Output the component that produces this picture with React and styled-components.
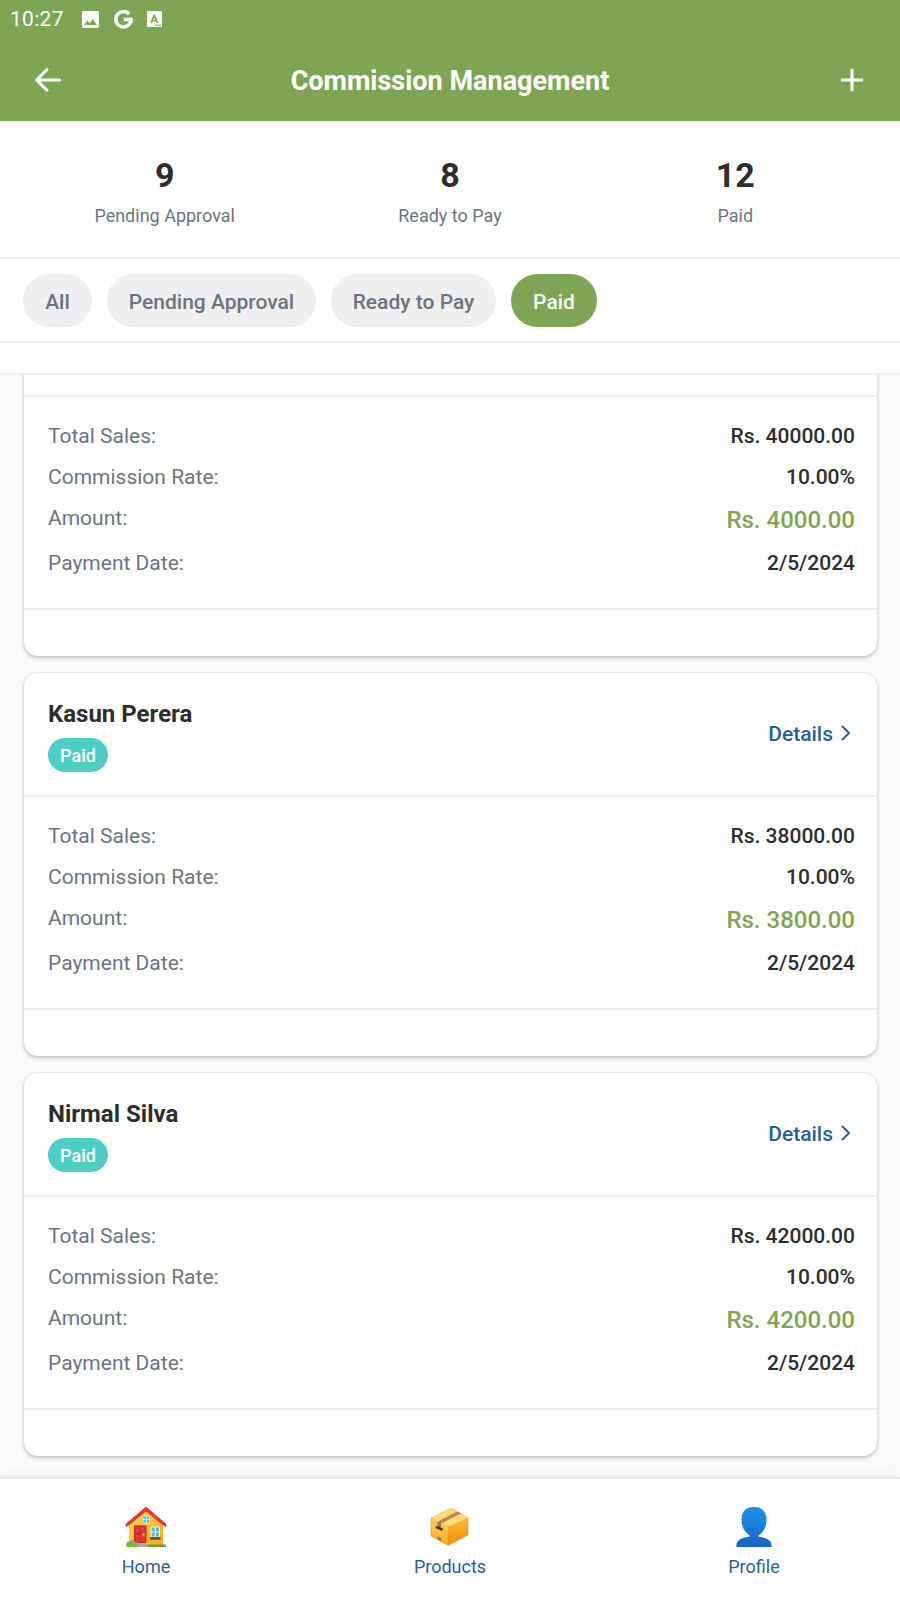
import React from 'react';
import styled, { createGlobalStyle } from 'styled-components';

const Global = createGlobalStyle`
  * { box-sizing: border-box; }
  html, body { margin: 0; padding: 0; }
  body { font-family: Roboto, sans-serif; background: #f8f9fb; color: #2d2d2d; }
`;

const Screen = styled.div`
  width: 900px; height: 1600px; overflow: hidden;
  display: flex; flex-direction: column; background: #f8f9fb;
`;
const Top = styled.header`
  height: 121px; flex: none; background: #7ea553; color: #fff;
`;
const StatusBar = styled.div`
  height: 38px; padding: 0 10px; display: flex; align-items: center;
  svg { display: block; }
`;
const Time = styled.span`
  font-size: 21px; letter-spacing: 0.3px; width: 71px; line-height: 24px;
`;
const StatusIcons = styled.div`
  display: flex; align-items: center; gap: 14px;
`;
const TitleBar = styled.div`
  height: 83px; padding: 0 33px; display: flex; align-items: center; justify-content: space-between;
  svg { display: block; }
`;
const Title = styled.h1`
  margin: 2px 0 0; font-size: 27px; font-weight: 700; line-height: 36px; letter-spacing: 0; white-space: nowrap;
`;
const Stats = styled.section`
  flex: none; height: 138px; background: #fff; border-bottom: 2px solid #eee;
  padding: 34px 22px 0; display: flex;
`;
const Stat = styled.div`
  flex: 1; display: flex; flex-direction: column; align-items: center;
`;
const StatValue = styled.div`
  font-size: 34px; font-weight: 700; line-height: 40px;
`;
const StatLabel = styled.div`
  margin-top: 10px; font-size: 18px; line-height: 22px; color: #6c757d;
`;
const Filters = styled.nav`
  flex: none; height: 84px; background: #fff; border-bottom: 2px solid #eee;
  padding: 15px 23px 0; display: flex; align-items: flex-start; gap: 15px;
`;
const Pill = styled.button`
  width: ${(p) => p.$w}px; height: 53px; border: 0; border-radius: 26.5px; padding: 3px 0 0;
  font: 500 21px/24px Roboto, sans-serif; white-space: nowrap;
  background: ${(p) => (p.$active ? '#7ea553' : '#efefef')};
  color: ${(p) => (p.$active ? '#fff' : '#6c757d')};
`;
const Strip = styled.div`
  flex: none; height: 32px; background: #fff; border-bottom: 2px solid #eee;
`;
const List = styled.main`
  flex: 1; min-height: 0; overflow: hidden; padding: 0 23px 0 24px;
  display: flex; flex-direction: column; justify-content: flex-end; gap: 17px; padding-bottom: 21px;
`;
const Card = styled.article`
  flex: none; height: 383px; background: #fff; border-radius: 14px;
  box-shadow: 0 2px 4px rgba(0, 0, 0, 0.2), 0 0 2px rgba(0, 0, 0, 0.12);
`;
const CardHead = styled.div`
  height: 124px; border-bottom: 2px solid #eee; padding: 0 26px 0 24px;
  display: flex; align-items: center; justify-content: space-between;
`;
const Person = styled.div`
  display: flex; flex-direction: column; align-items: flex-start; padding-top: 2px;
`;
const Name = styled.h2`
  margin: 0; font-size: 24px; font-weight: 700; line-height: 30px;
`;
const Badge = styled.span`
  margin-top: 9px; width: 60px; height: 34px; border-radius: 17px; background: #4ecdc4; color: #fff;
  font-size: 18px; font-weight: 500; line-height: 36px; text-align: center;
`;
const Details = styled.a`
  display: flex; align-items: center; gap: 8px; color: #2a6093; font-size: 21px; font-weight: 500; line-height: 26px;
  svg { display: block; margin-bottom: 2px; }
`;
const CardBody = styled.div`
  height: 213px; border-bottom: 2px solid #eee; padding: 26px 22px 0 24px;
`;
const Row = styled.div`
  display: flex; justify-content: space-between; align-items: flex-start;
  height: ${(p) => (p.$big ? 45 : 41)}px;
`;
const Label = styled.span`
  font-size: 21px; line-height: 26px; color: #6c757d;
`;
const Value = styled.span`
  font-weight: 500; font-size: ${(p) => (p.$big ? 24 : 21)}px; line-height: ${(p) => (p.$big ? 30 : 26)}px;
  color: ${(p) => (p.$big ? '#7ea553' : '#2d2d2d')};
`;
const TabBar = styled.footer`
  flex: none; height: 123px; background: #fff; border-top: 2px solid #e6e9ed; z-index: 1;
  box-shadow: 0 -1px 10px rgba(0, 0, 0, 0.07); padding: 27px 0 0; padding-right: 6px; padding-left: 0;
  display: flex; justify-content: space-between; padding: 27px 86px 0;
`;
const Tab = styled.a`
  width: 120px; display: flex; flex-direction: column; align-items: center;
  color: #2a6093; font-size: 18px; line-height: 22px;
  svg { display: block; margin-bottom: 8px; }
`;

const ImageIcon = () => (
  <svg width="19" height="19" viewBox="0 0 19 19">
    <path fill="#fff" fillRule="evenodd" d="M2.5 1h14A1.6 1.6 0 0 1 18 2.5v14a1.6 1.6 0 0 1-1.5 1.5h-14A1.6 1.6 0 0 1 1 16.500v-14A1.600 1.600 0 0 1 2.500 1zM3 15h13l-4.300-5.700-3.100 4-2.200-2.700z" />
  </svg>
);
const GoogleIcon = () => (
  <svg width="19" height="19" viewBox="0 0 19 19">
    <path d="M15.200 4A7.700 7.700 0 1 0 17.200 9.500H9.800" fill="none" stroke="#fff" strokeWidth="3.400" />
  </svg>
);
const LetterIcon = () => (
  <svg width="15" height="16" viewBox="0 0 15 16">
    <rect width="15" height="16" rx="1" fill="#fff" />
    <path d="M4.200 12L7 4.500h.6L10.400 12M5.200 9.500h4.200" fill="none" stroke="#7ea553" strokeWidth="1.700" />
    <path d="M8 14.200h1.500M10.300 14.200h1.400M12.400 14.200h1.300" stroke="#7ea553" strokeWidth="1.400" />
  </svg>
);
const BackIcon = () => (
  <svg width="30" height="30" viewBox="0 0 30 30">
    <path d="M14 4.500L3.700 15 14 25.200M4 15h22.500" fill="none" stroke="#fff" strokeWidth="3" strokeLinecap="round" strokeLinejoin="round" />
  </svg>
);
const PlusIcon = () => (
  <svg width="30" height="30" viewBox="0 0 30 30">
    <path d="M15 4v22M4 15h22" stroke="#fff" strokeWidth="3" />
  </svg>
);
const Chevron = () => (
  <svg width="10" height="16" viewBox="0 0 10 16">
    <path d="M1.500 1.500L8 8l-6.500 6.500" fill="none" stroke="#2a6093" strokeWidth="1.900" strokeLinecap="round" strokeLinejoin="round" />
  </svg>
);

const HouseIcon = () => (
  <svg width="42" height="42" viewBox="0 0 42 42">
    <defs>
      <linearGradient id="wall" x1="0" y1="0" x2="1" y2="1">
        <stop offset="0" stopColor="#ffd54a" /><stop offset="1" stopColor="#fba91a" />
      </linearGradient>
    </defs>
    <path d="M4 17L21 3l17 14v22H4z" fill="url(#wall)" />
    <path d="M21 1L1 18v2.500L4 19 21 5l17 14 3 1.500V18z" fill="#e53935" stroke="#c62828" strokeWidth=".6" />
    <rect x="17.500" y="9.500" width="7.500" height="8" fill="#fff3c4" />
    <path d="M18.300 10.300h2.500v2.800h-2.500zM21.700 10.300h2.500v2.800h-2.500zM18.300 14h2.500v2.700h-2.500zM21.700 14h2.500v2.700h-2.500z" fill="#4fb8ee" />
    <rect x="9" y="19.500" width="12.500" height="18" fill="#c62828" />
    <path d="M10.500 21h4.200v6h-4.200zM15.800 21H20v6h-4.200zM10.500 28.500h4.200V36h-4.200zM15.800 28.500H20V36h-4.200z" fill="#e5393c" />
    <circle cx="18.600" cy="28.500" r="1.200" fill="#ffca28" />
    <rect x="25.500" y="20.500" width="9.500" height="11" fill="#fff3c4" />
    <path d="M26.700 21.500h3v4h-3zM30.900 21.500h3v4h-3zM26.700 26.500h3v4h-3zM30.900 26.500h3v4h-3z" fill="#4fb8ee" />
    <rect x="25" y="31" width="10.500" height="2.800" fill="#6d4c41" />
    <path d="M2 38.500h39V41H2z" fill="#689f38" />
    <path d="M12 37h10l2 4H12z" fill="#b0a5a3" />
    <path d="M1 39c0-3 2-3.500 3.500-3 .5-2.500 4-2.500 4.800-.4 2.200-.6 3.700 1 3.400 2.400V41H2z" fill="#7cb342" />
  </svg>
);
const BoxIcon = () => (
  <svg width="42" height="42" viewBox="0 0 42 42">
    <defs>
      <linearGradient id="boxRight" x1="0" y1="0" x2="0" y2="1">
        <stop offset="0" stopColor="#fbb92f" /><stop offset="1" stopColor="#f08d12" />
      </linearGradient>
      <linearGradient id="boxLeft" x1="0" y1="0" x2="0" y2="1">
        <stop offset="0" stopColor="#ffd255" /><stop offset="1" stopColor="#f9a825" />
      </linearGradient>
    </defs>
    <path d="M2 12L19 21v18.500L2 30z" fill="url(#boxLeft)" />
    <path d="M19 21l20-9v17L19 39.500z" fill="url(#boxRight)" />
    <path d="M2 12L22.500 2 39 12 19 21z" fill="#ffdd75" stroke="#e8ac35" strokeWidth=".6" />
    <path d="M8.500 15.500L28.500 5.500l3.500 2L12 17.500z" fill="#bd8062" />
    <path d="M8.500 15.500l3.500 2v4l-3.500-1.800zM8.500 30l3.500 2v3.300l-3.500-2z" fill="#a87252" />
    <path d="M8 21.300l4.500 2" stroke="#4e342e" strokeWidth="2.800" strokeLinecap="round" />
    <path d="M2 12v18l17 9.500L39 29V12" fill="none" stroke="#d99225" strokeWidth=".6" />
  </svg>
);
const PersonIcon = () => (
  <svg width="42" height="42" viewBox="0 0 42 42">
    <defs>
      <linearGradient id="person" x1="0" y1="0" x2="0" y2="1">
        <stop offset="0.200" stopColor="#1e88e5" /><stop offset="1" stopColor="#1565c0" />
      </linearGradient>
    </defs>
    <path d="M21 1c8 0 12.500 4.300 12.500 12.500 0 7-2.500 12-8 16v1.200c7 .6 13 3.300 13 8.300v2h-35v-2c0-5 6-7.700 13-8.300v-1.200c-5.500-4-8-9-8-16C8.500 5.300 13 1 21 1z" fill="url(#person)" />
  </svg>
);

const filters = [['All', 69], ['Pending Approval', 209], ['Ready to Pay', 165], ['Paid', 86]];
const stats = [[9, 'Pending Approval'], [8, 'Ready to Pay'], [12, 'Paid']];
const commissions = [
  { name: 'Nimal Fernando', sales: '40000.00', amount: '4000.00' },
  { name: 'Kasun Perera', sales: '38000.00', amount: '3800.00' },
  { name: 'Nirmal Silva', sales: '42000.00', amount: '4200.00' },
];

const CommissionCard = ({ name, sales, amount }) => (
  <Card>
    <CardHead>
      <Person><Name>{name}</Name><Badge>Paid</Badge></Person>
      <Details>Details <Chevron /></Details>
    </CardHead>
    <CardBody>
      <Row><Label>Total Sales:</Label><Value>Rs. {sales}</Value></Row>
      <Row><Label>Commission Rate:</Label><Value>10.00%</Value></Row>
      <Row $big><Label>Amount:</Label><Value $big>Rs. {amount}</Value></Row>
      <Row><Label>Payment Date:</Label><Value>2/5/2024</Value></Row>
    </CardBody>
  </Card>
);

export default function App() {
  return (
    <Screen>
      <Global />
      <Top>
        <StatusBar>
          <Time>10:27</Time>
          <StatusIcons><ImageIcon /><GoogleIcon /><LetterIcon /></StatusIcons>
        </StatusBar>
        <TitleBar><BackIcon /><Title>Commission Management</Title><PlusIcon /></TitleBar>
      </Top>
      <Stats>
        {stats.map(([v, l]) => <Stat key={l}><StatValue>{v}</StatValue><StatLabel>{l}</StatLabel></Stat>)}
      </Stats>
      <Filters>
        {filters.map(([f, w]) => <Pill key={f} $w={w} $active={f === 'Paid'}>{f}</Pill>)}
      </Filters>
      <Strip />
      <List>
        {commissions.map((c) => <CommissionCard key={c.name} {...c} />)}
      </List>
      <TabBar>
        <Tab><HouseIcon />Home</Tab>
        <Tab><BoxIcon />Products</Tab>
        <Tab><PersonIcon />Profile</Tab>
      </TabBar>
    </Screen>
  );
}
